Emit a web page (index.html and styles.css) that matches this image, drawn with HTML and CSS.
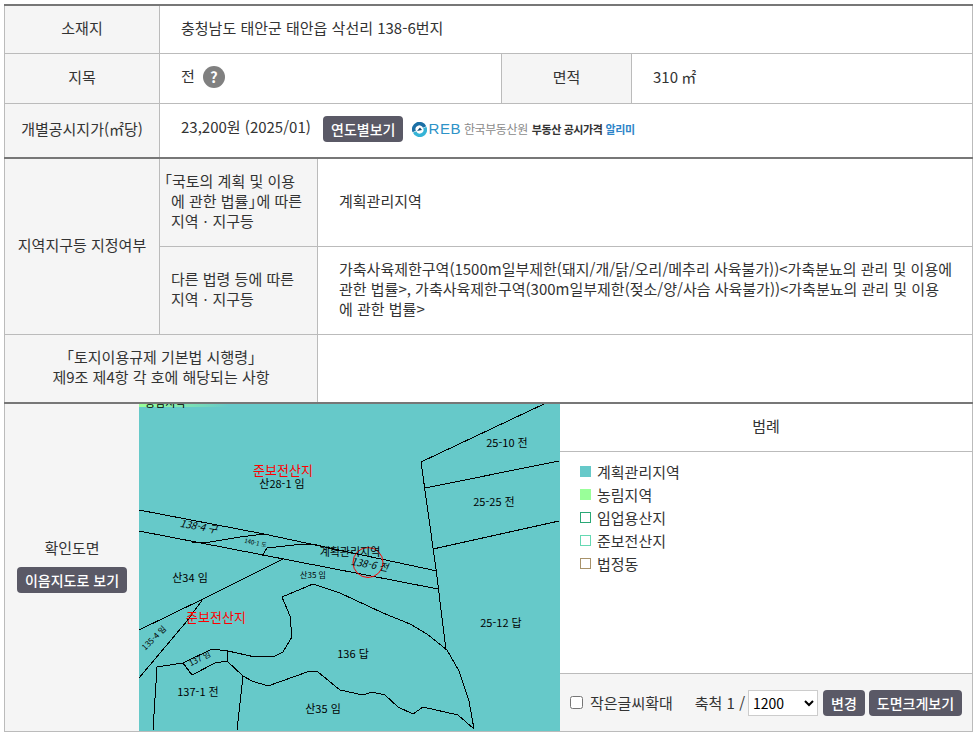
FILE: index.html
```html
<!DOCTYPE html>
<html lang="ko">
<head>
  <meta charset="UTF-8">
  <title>토지이용계획 열람</title>
  <link rel="stylesheet" href="styles.css">
</head>
<body>
  <div class="wrap">
    <!-- 토지 기본 정보 -->
    <table class="land">
      <colgroup>
        <col class="c1"><col class="c2"><col class="c3"><col class="c4"><col class="c5">
      </colgroup>
      <tr class="r1">
        <th>소재지</th>
        <td colspan="4">충청남도 태안군 태안읍 삭선리 138-6번지</td>
      </tr>
      <tr class="r2">
        <th>지목</th>
        <td colspan="2"><span class="jimok">전</span><span class="help">?</span></td>
        <th>면적</th>
        <td>310 ㎡</td>
      </tr>
      <tr class="r3">
        <th>개별공시지가(㎡당)</th>
        <td colspan="4" class="price">
          <span>23,200원 (2025/01)</span>
          <button type="button" class="btn">연도별보기</button>
          <span class="reb">
            <svg class="reb-mark" width="15" height="15" viewBox="0 0 15 15">
              <path d="M2.2 9.5 A5.5 5.5 0 0 1 12.6 5" fill="none" stroke="#1b6fa5" stroke-width="3.6"/>
              <path d="M12.8 5.5 A5.5 5.5 0 0 1 2.6 10" fill="none" stroke="#35b3d6" stroke-width="3.6"/>
              <path d="M5 9 L8 5.5 L10 8 Z" fill="#17496f"/>
            </svg>
            <span class="reb-en">REB</span>
            <span class="reb-org">한국부동산원</span>
            <span class="reb-title">부동산 공시가격</span>
            <span class="reb-blue">알리미</span>
          </span>
        </td>
      </tr>
      <tr class="r4">
        <th rowspan="2">지역지구등 지정여부</th>
        <th class="law"><span class="hang">「</span>국토의 계획 및 이용<br>에 관한 법률<span class="close">」</span>에 따른<br>지역ㆍ지구등</th>
        <td colspan="3" class="desc">계획관리지역</td>
      </tr>
      <tr class="r5">
        <th class="law">다른 법령 등에 따른<br>지역ㆍ지구등</th>
        <td colspan="3" class="desc">가축사육제한구역(1500m일부제한(돼지/개/닭/오리/메추리 사육불가))&lt;가축분뇨의 관리 및 이용에 관한 법률&gt;, 가축사육제한구역(300m일부제한(젖소/양/사슴 사육불가))&lt;가축분뇨의 관리 및 이용에 관한 법률&gt;</td>
      </tr>
      <tr class="r6">
        <th colspan="2">「토지이용규제 기본법 시행령」<br>제9조 제4항 각 호에 해당되는 사항</th>
        <td colspan="3"></td>
      </tr>
    </table>

    <!-- 확인도면 -->
    <div class="plan">
      <div class="plan-side">
        <span>확인도면</span>
        <button type="button" class="btn">이음지도로 보기</button>
      </div>

      <svg class="map" width="421" height="327" viewBox="139 405 421 327">
        <defs>
          <linearGradient id="topGreen">
            <stop offset="0" stop-color="#99ff99"/>
            <stop offset="1" stop-color="#66c9c9"/>
          </linearGradient>
        </defs>
        <rect x="139" y="405" width="421" height="327" fill="#66c9c9"/>
        <rect x="139" y="405" width="89" height="3" fill="url(#topGreen)"/>
        <g class="parcel">
          <path d="M139 511 L264 535 L437 572"/>
          <path d="M139 532 L263 556 L330 569 L438 590"/>
          <path d="M192 543 L210 543 L240 538 L264 535"/>
          <path d="M262 557 L267 549 L303 545 L317 546 L340 552"/>
          <path d="M139 631 L203 600 L283 560"/>
          <path d="M203 600 L187 622 L139 679"/>
          <path d="M421 463 L546 404"/>
          <path d="M425 489 L559 462"/>
          <path d="M433 550 L559 522"/>
          <path d="M421 463 L436 570 L446 651"/>
          <path d="M282 598 L313 585 L340 594 L383 614 L410 625 L427 635 L447 651 L459 672 L469 702 L474 730"/>
          <path d="M282 598 L290 617 L292 638 L283 653 L275 657 L255 658 L228 652 L212 650 L183 664 L157 668 L153 731"/>
          <path d="M183 664 L192 676 L215 664 L227 662 L228 652"/>
          <path d="M227 662 L243 677 L252 682 L268 687 L310 672 L318 673 L340 691 L363 696 L372 693 L385 696 L398 708 L413 715 L423 708 L458 716 L474 730"/>
          <path d="M243 677 L237 731"/>
        </g>
        <circle class="mark" cx="368" cy="563.5" r="15"/>
        <g class="map-text">
          <text x="145" y="408">농림지역</text>
          <text x="282" y="489" class="mid">산28-1 임</text>
          <text x="190" y="583" class="mid">산34 임</text>
          <text x="353" y="659" class="mid">136 답</text>
          <text x="198" y="697" class="mid">137-1 전</text>
          <text x="323" y="714" class="mid">산35 임</text>
          <text x="501" y="628" class="mid">25-12 답</text>
          <text x="494" y="507" class="mid">25-25 전</text>
          <text x="507" y="448" class="mid">25-10 전</text>
          <text x="350" y="557" class="mid">계획관리지역</text>
          <text x="313" y="579" class="mid tiny">산35 임</text>
          <text x="198" y="531" class="mid slant" transform="rotate(10 198 531)">138-4 구</text>
          <text x="369" y="569" class="mid slant" transform="rotate(10 369 569)">138-6 전</text>
          <text x="255" y="546" class="mid micro" transform="rotate(12 255 546)">140-1 도</text>
          <text x="156" y="641" class="mid tiny" transform="rotate(-45 156 641)">135-4 임</text>
          <text x="201" y="662" class="mid tiny" transform="rotate(-27 201 662)">137 임</text>
          <text x="283" y="476" class="mid red">준보전산지</text>
          <text x="216" y="623" class="mid red">준보전산지</text>
        </g>
      </svg>

      <div class="legend">
        <div class="legend-head">범례</div>
        <ul class="legend-list">
          <li><i class="sw sw-plan"></i>계획관리지역</li>
          <li><i class="sw sw-farm"></i>농림지역</li>
          <li><i class="sw sw-forest"></i>임업용산지</li>
          <li><i class="sw sw-reserve"></i>준보전산지</li>
          <li><i class="sw sw-dong"></i>법정동</li>
        </ul>
        <div class="legend-foot">
          <label class="zoomtext"><input type="checkbox">작은글씨확대</label>
          <span class="scale">축척 1 /</span>
          <select class="scale-select">
            <option>1200</option>
          </select>
          <button type="button" class="btn">변경</button>
          <button type="button" class="btn">도면크게보기</button>
        </div>
      </div>
    </div>
  </div>
</body>
</html>
```

FILE: styles.css
```css
/* 전체 */
body {
  margin: 0;
  padding: 4px 0 0 4px;
  font-family: "Noto Sans CJK KR", "Liberation Sans", sans-serif;
  font-size: 15px;
  color: #333;
  background: #fff;
}

.wrap {
  width: 969px;
}

.btn {
  height: 26px;
  padding: 0 8px;
  border: 0;
  border-radius: 4px;
  background: #5a5966;
  color: #fff;
  font-family: inherit;
  font-size: 14px;
  font-weight: 500;
  line-height: 26px;
}

/* 상단 표 */
.land {
  width: 969px;
  table-layout: fixed;
  border-collapse: collapse;
  border-top: 2px solid #777;
  border-bottom: 2px solid #777;
}

.c1 { width: 155px; }
.c2 { width: 158px; }
.c3 { width: 184px; }
.c4 { width: 130px; }

.land th,
.land td {
  padding: 0 0 2px;
  border: 1px solid #bbb;
  line-height: 20px;
}

.land th {
  background: #f5f5f5;
  font-weight: 400;
  text-align: center;
}

.land td {
  padding-left: 21px;
}

.land th.law {
  padding-left: 11px;
  text-align: left;
}

.hang {
  margin-left: -14px;
}

.close {
  margin-right: -7px;
}

.land td.desc {
  padding: 0 20px 2px 21px;
}

.r1 { height: 48px; }
.r2 { height: 50px; }
.r3 { height: 55px; }
.r3 th, .r3 td { border-bottom: 2px solid #777; }
.r4 { height: 88px; }
.r5 { height: 88px; }
.r6 { height: 69px; }

.jimok {
  margin-right: 8px;
}

.help {
  display: inline-block;
  width: 22px;
  height: 22px;
  border-radius: 50%;
  background: #808080;
  color: #fff;
  font-size: 15px;
  font-weight: 700;
  line-height: 22px;
  text-align: center;
  vertical-align: middle;
}

.price {
  white-space: nowrap;
}

.price .btn {
  margin: 0 4px 0 8px;
  vertical-align: middle;
}

.reb {
  display: inline-flex;
  align-items: center;
  vertical-align: middle;
  font-size: 11px;
  letter-spacing: -0.4px;
}

.reb-mark {
  margin-right: 2px;
}

.reb-en {
  margin-right: 3px;
  color: #2d93c8;
  font-family: "Liberation Sans", sans-serif;
  font-size: 15px;
  letter-spacing: 0.5px;
}

.reb-org {
  margin-right: 4px;
  color: #8a8a8a;
  font-size: 12px;
}

.reb-title {
  margin-right: 3px;
  color: #333;
  font-weight: 700;
}

.reb-blue {
  color: #2d84c8;
  font-weight: 700;
}

/* 확인도면 */
.plan {
  display: flex;
  height: 327px;
  border-left: 1px solid #bbb;
  border-right: 1px solid #bbb;
  border-bottom: 1px solid #bbb;
}

.plan-side {
  display: flex;
  flex-direction: column;
  align-items: center;
  justify-content: center;
  gap: 9px;
  width: 134px;
  padding-bottom: 5px;
  box-sizing: border-box;
  background: #f5f5f5;
}

.plan-side span {
  line-height: 20px;
}

.map {
  display: block;
  flex: none;
  shape-rendering: crispEdges;
}

.parcel path {
  fill: none;
  stroke: #000;
  stroke-width: 1;
}

.mark {
  fill: none;
  stroke: #f00;
  stroke-width: 1;
  shape-rendering: auto;
}

.map-text text {
  fill: #000;
  font-family: "Noto Sans CJK KR", sans-serif;
  font-size: 11px;
}

.map-text .mid { text-anchor: middle; }
.map-text .red { fill: #f00; font-size: 13px; }
.map-text .tiny { font-size: 8px; }
.map-text .micro { font-size: 6px; }
.map-text .slant { font-style: italic; font-size: 10px; }

/* 범례 */
.legend {
  display: flex;
  flex: 1;
  flex-direction: column;
  min-width: 0;
}

.legend-head {
  height: 47px;
  line-height: 43px;
  border-bottom: 1px solid #bbb;
  text-align: center;
}

.legend-list {
  flex: 1;
  margin: 0;
  padding: 8px 0 0 20px;
  list-style: none;
}

.legend-list li {
  display: flex;
  align-items: center;
  height: 23px;
}

.sw {
  box-sizing: border-box;
  width: 11px;
  height: 11px;
  margin-right: 6px;
  border: 1px solid transparent;
}

.sw-plan { background: #66c9c9; }
.sw-farm { background: #99ff99; }
.sw-forest { border-color: #2aa876; }
.sw-reserve { border-color: #66d9b3; }
.sw-dong { border-color: #a8926a; }

.legend-foot {
  display: flex;
  align-items: center;
  height: 58px;
  box-sizing: border-box;
  padding-left: 10px;
  border-top: 1px solid #bbb;
  background: #f5f5f5;
}

.zoomtext {
  display: flex;
  align-items: center;
}

.zoomtext input {
  width: 13px;
  height: 13px;
  margin: 0 7px 0 0;
}

.scale {
  margin: 0 3px 0 22px;
}

.scale-select {
  width: 70px;
  height: 26px;
  margin-right: 5px;
  border: 1px solid #ccc;
  background: #fff;
  color: #000;
  font-family: inherit;
  font-size: 14px;
}

.legend-foot .btn {
  margin-right: 4px;
}
```
